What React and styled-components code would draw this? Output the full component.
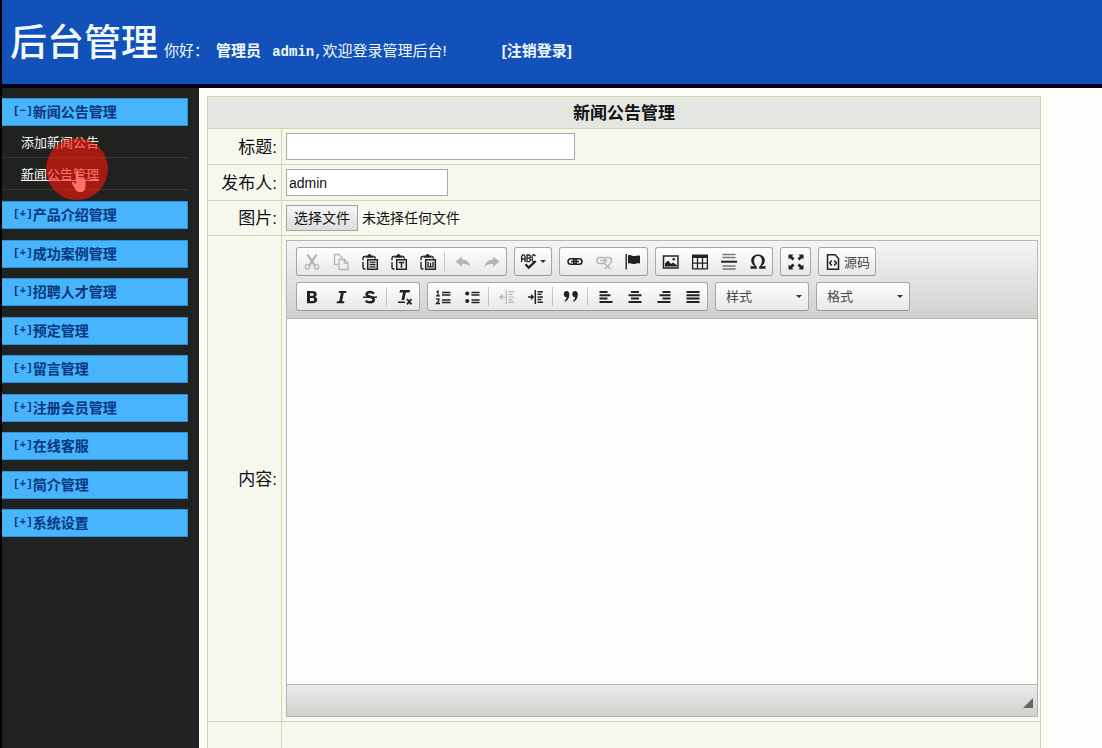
import React, { useState } from 'react';
import styled, { createGlobalStyle, css } from 'styled-components';

const menuGroups = [
  { name: '新闻公告管理', open: true, children: ['添加新闻公告', '新闻公告管理'] },
  { name: '产品介绍管理' },
  { name: '成功案例管理' },
  { name: '招聘人才管理' },
  { name: '预定管理' },
  { name: '留言管理' },
  { name: '注册会员管理' },
  { name: '在线客服' },
  { name: '简介管理' },
  { name: '系统设置' },
];

const clipboard = (
  <>
    <path d="M4.5 3.5H3.8C2.6 3.5 2 4.1 2 5.200v2M2 9v5.500c0 1.100.6 1.500 1.500 1.500h1" fill="none" stroke="currentColor" strokeWidth="1.400" />
    <path d="M4.500 2.500h2.500C7 1.500 7.700 1 8.500 1s1.500.5 1.500 1.500h2.500v2.200h-8z" />
    <path d="M12.500 3.500c1.200 0 1.800.6 1.800 1.700v.6" fill="none" stroke="currentColor" strokeWidth="1.300" />
    <path d="M6.700 6.700h9.600v9.600H6.700z" fill="none" stroke="currentColor" strokeWidth="1.500" />
  </>
);

const icons = {
  cut: (
    <>
      <path d="M4.500 1.500l7 10.500M13.500 1.500l-7 10.500" fill="none" stroke="currentColor" strokeWidth="2.300" />
      <circle cx="4.500" cy="13.800" r="2.200" fill="none" stroke="currentColor" strokeWidth="1.400" />
      <circle cx="13.500" cy="13.800" r="2.200" fill="none" stroke="currentColor" strokeWidth="1.400" />
    </>
  ),
  copy: (
    <g fill="none" stroke="currentColor" strokeWidth="1.300">
      <path d="M6 11.500H2.500v-10h4.500l3 3V6" />
      <path d="M7 6.500h5.500l3.500 3.500v6.500H7z" />
      <path d="M12.300 6.700v3.500h3.500" />
    </g>
  ),
  paste: (
    <>
      {clipboard}
      <path d="M8.500 9.200h6M8.500 11.500h6M8.500 13.800h6" stroke="currentColor" strokeWidth="1.300" />
    </>
  ),
  pasteText: (
    <>
      {clipboard}
      <path d="M8.700 9.500h5.600M11.500 9.500v5.200" stroke="currentColor" strokeWidth="1.500" />
    </>
  ),
  pasteWord: (
    <>
      {clipboard}
      <path d="M9 8.800v5h5v-5M11.500 9.500v4" fill="none" stroke="currentColor" strokeWidth="1.300" />
    </>
  ),
  undo: <path d="M1.500 8.500L8 3.500v3c4.500.2 7.500 2.500 8.500 7.500-2-2.500-4.500-3.200-8.500-3v3z" />,
  redo: <path d="M16.500 8.500L10 3.500v3c-4.500.2-7.500 2.500-8.500 7.500 2-2.500 4.500-3.200 8.500-3v3z" />,
  spell: (
    <>
      <path
        d="M1.600 9V3.500l1.200-1.700h1.100l1.200 1.700V9M1.600 6h3.500M7 8.600V2h2.300l1 1v1.200l-1 1H7h2.300l1 1v1.400l-1 1zM15.500 3.200L14.500 2h-1.300l-1 1v4.600l1 1h1.300"
        fill="none"
        stroke="currentColor"
        strokeWidth="1.300"
      />
      <path d="M5.500 11.200l3.200 3.500 7-6.700" fill="none" stroke="currentColor" strokeWidth="2.300" />
    </>
  ),
  link: (
    <g fill="none" stroke="currentColor" strokeWidth="1.500">
      <rect x="2" y="5.700" width="8.500" height="5.600" rx="2.800" />
      <rect x="7.500" y="5.700" width="8.500" height="5.600" rx="2.800" />
      <path d="M5 8.500h8" />
    </g>
  ),
  unlink: (
    <g fill="none" stroke="currentColor" strokeWidth="1.500">
      <rect x="1.800" y="4.500" width="8.500" height="6" rx="3" />
      <path d="M10 4.500h3.500c2 0 3 1.500 3 3S15.500 10 14.500 10M5.500 7.500h7" />
      <path d="M9.500 10.500l6 5.500M15.500 10.500l-6 5.500" />
    </g>
  ),
  flag: (
    <>
      <path d="M2.200 1v15.500" stroke="currentColor" strokeWidth="1.400" />
      <path d="M4 2.200c2.500-1 4 .9 6.500.8 2 0 3.500-.8 5.500-.3v7.800c-2-.5-3.500.5-5.500.5C8 11 6.500 9.500 4 10.500z" />
    </>
  ),
  image: (
    <>
      <rect x="1.500" y="3" width="14.500" height="12" fill="none" stroke="currentColor" strokeWidth="1.500" />
      <circle cx="11.800" cy="6.300" r="1.300" />
      <path d="M3 13.500v-3l3-3 3 3.500 2-1.500 3.800 2.500v1.500z" />
    </>
  ),
  table: (
    <>
      <path d="M1 1.500h16v3.500H1z" />
      <path d="M1.600 2v13.900h14.800V2M1.500 10.200h15M6.500 4v12M11.500 4v12" fill="none" stroke="currentColor" strokeWidth="1.300" />
    </>
  ),
  rule: (
    <>
      <path d="M2.500 1.500h13M2.500 4.500h13M2.500 13h13M2.500 16h13" stroke="currentColor" strokeOpacity=".6" strokeWidth="1.500" />
      <path d="M1 8.700h16" stroke="currentColor" strokeWidth="2" />
    </>
  ),
  omega: (
    <path
      d="M2 13.200h3.700C3.500 11.800 2.200 9.900 2.200 7.500 2.200 4 5 1.500 9 1.500s6.800 2.500 6.800 6c0 2.400-1.300 4.300-3.500 5.700H16l.5-1.200v3.800h-6.300v-2.100c1.700-1.500 2.700-3.500 2.700-5.900C12.900 5 11.500 3 9 3S5.100 5 5.100 7.800c0 2.400 1 4.400 2.700 5.900v2.100H1.500V12z"
    />
  ),
  expand: (
    <path d="M1.500 1.500h5L5 3l2.500 2.500-2 2L3 5 1.500 6.500zM16.500 1.500v5L15 5l-2.500 2.500-2-2L13 3l-1.500-1.500zM1.500 16.500v-5L3 13l2.500-2.500 2 2L5 15l1.500 1.500zM16.500 16.500h-5L13 15l-2.500-2.500 2-2L15 13l1.500-1.500z" />
  ),
  source: (
    <g fill="none" stroke="currentColor" strokeWidth="1.500">
      <path d="M3.500 1.800h7.500l3.500 3.700v10.700h-11z" />
      <path d="M7.700 7.500L5.700 10l2 2.500M10.300 7.500l2 2.500-2 2.500" />
    </g>
  ),
  bold: <path fillRule="evenodd" d="M4 3h5.500c2.800 0 4.200 1.200 4.200 3.200 0 1.300-.7 2.200-1.900 2.600 1.500.4 2.400 1.400 2.400 2.900 0 2.200-1.600 3.500-4.500 3.500H4zM7 5.300v2.500h2c1.200 0 1.700-.4 1.700-1.300 0-.8-.5-1.200-1.700-1.200zM7 10v3h2.300c1.200 0 1.800-.5 1.800-1.500S10.500 10 9.300 10z" />,
  italic: <path d="M7 3h7.500l-.4 1.900h-2.300l-1.700 8.400h2.300L12 15.200H4.500l.4-1.900h2.300l1.700-8.400H6.600z" />,
  strike: (
    <>
      <path d="M13 5.400C11.800 4.500 10.500 4 9 4 7 4 5.600 4.900 5.600 6.300c0 3.200 7.200 1.800 7.200 5.200 0 1.700-1.500 2.800-3.800 2.800-1.600 0-3.200-.5-4.300-1.500" fill="none" stroke="currentColor" strokeWidth="2.500" />
      <path d="M2 9.200h14" stroke="currentColor" strokeWidth="1.500" />
    </>
  ),
  removeFormat: (
    <>
      <path d="M4 2h10l-.5 2.500h-3.700L8.300 12H5.500L7 4.500H3.500zM2 13.500h7V15H2z" />
      <path d="M11 11l4.500 5.300M15.500 11L11 16.300" stroke="currentColor" strokeWidth="1.800" />
    </>
  ),
  numbered: (
    <>
      <path d="M8 4.500h8.500M8 7h8.500M8 12h8.500M8 14.500h8.500" stroke="currentColor" strokeWidth="1.400" />
      <path d="M2.500 4.200L4 3v4.800M2 7.800h4M2.200 11h2.600v2L2.500 15.500H6" fill="none" stroke="currentColor" strokeWidth="1.300" />
    </>
  ),
  bulleted: (
    <>
      <circle cx="4.200" cy="5.500" r="2" />
      <circle cx="4.200" cy="13" r="2" />
      <path d="M8.500 4.500h8M8.500 7h8M8.500 12h8M8.500 14.500h8" stroke="currentColor" strokeWidth="1.400" />
    </>
  ),
  outdent: (
    <>
      <path d="M8.300 2v14M10.500 3.700h5.500M10.500 6.300h4M10.500 9h5.500M10.500 11.600h4M10.500 14.200h5.500M3 9h4" stroke="currentColor" strokeWidth="1.200" />
      <path d="M1 9l3.500-3v6z" />
    </>
  ),
  indent: (
    <>
      <path d="M8.300 2v14M10.500 3.700h5.500M10.500 6.300h4M10.500 9h5.500M10.500 11.600h4M10.500 14.200h5.500M1 9h4" stroke="currentColor" strokeWidth="1.500" />
      <path d="M7.300 9L4 6v6z" />
    </>
  ),
  quote: <path d="M1.800 6.500a2.800 2.800 0 1 1 5.500-.2c.2 3.200-1.300 6.200-4.300 7.500l-.5-1c1.300-.9 2-2.100 2.100-3.600-1.600 0-2.800-1.200-2.800-2.700zM10.300 6.500a2.800 2.800 0 1 1 5.500-.2c.2 3.200-1.300 6.200-4.300 7.500l-.5-1c1.300-.9 2-2.100 2.100-3.600-1.600 0-2.800-1.200-2.800-2.700z" />,
  left: <path d="M2.500 3h8v2h-8zM2.500 6.300h11v2h-11zM2.500 9.600h8v2h-8zM2.500 12.900h13v2h-13z" />,
  center: <path d="M5 3h8v2H5zM2.500 6.300h13v2h-13zM5 9.600h8v2H5zM2.500 12.900h13v2h-13z" />,
  right: <path d="M7.500 3h8v2h-8zM4.500 6.300h11v2h-11zM7.500 9.600h8v2h-8zM2.500 12.900h13v2h-13z" />,
  justify: <path d="M2.500 3h13v2h-13zM2.500 6.300h13v2h-13zM2.500 9.600h13v2h-13zM2.500 12.900h13v2h-13z" />,
};

// '|' is a separator, a leading '-' marks a disabled button
const toolbarTop = [
  ['-cut', '-copy', 'paste', 'pasteText', 'pasteWord', '|', '-undo', '-redo'],
  ['spell'],
  ['link', '-unlink', 'flag'],
  ['image', 'table', 'rule', 'omega'],
  ['expand'],
  ['source'],
];

const toolbarBottom = [
  ['bold', 'italic', 'strike', '|', 'removeFormat'],
  ['numbered', 'bulleted', '|', '-outdent', 'indent', '|', 'quote', '|', 'left', 'center', 'right', 'justify'],
];

const ToolIcon = ({ name }) => (
  <svg width="18" height="18" viewBox="0 0 18 18" fill="currentColor" aria-hidden="true">
    {icons[name]}
  </svg>
);

const ToolGroup = ({ items }) => (
  <Group>
    {items.map((item, index) => {
      if (item === '|') return <Separator key={index} />;
      const disabled = item.startsWith('-');
      const name = item.replace('-', '');
      return (
        <ToolButton
          key={index}
          type="button"
          aria-label={name === 'source' ? undefined : name}
          disabled={disabled}
          $wide={name === 'spell' || name === 'source'}
        >
          <ToolIcon name={name} />
          {name === 'spell' && <Caret />}
          {name === 'source' && <span>源码</span>}
        </ToolButton>
      );
    })}
  </Group>
);

const ToolSelect = ({ label }) => (
  <SelectBox>
    <select aria-label={label}>
      <option>{label}</option>
    </select>
    <Caret />
  </SelectBox>
);

const App = () => {
  const [title, setTitle] = useState('');
  const [author, setAuthor] = useState('admin');
  const [content, setContent] = useState('');
  const [fileName, setFileName] = useState('');

  return (
    <Page>
      <GlobalStyle />
      <Header>
        <Brand>后台管理</Brand>
        <Welcome>
          <span>你好：</span>
          <UserName>
            管理员 <code>admin</code>
          </UserName>
          <code>,</code>
          <span>欢迎登录管理后台!</span>
        </Welcome>
        <Logout href="#logout">[注销登录]</Logout>
      </Header>

      <Body>
        <Sidebar>
          {menuGroups.map((group) => (
            <MenuGroup key={group.name}>
              <MenuButton type="button" aria-expanded={!!group.open}>
                <code>{group.open ? '[−]' : '[+]'}</code>
                {group.name}
              </MenuButton>
              {group.children?.map((child, index) => (
                <SubItem key={child}>
                  <SubLink href="#news" $active={index === 1}>
                    {child}
                  </SubLink>
                  {index === 1 && (
                    <Pointer>
                      <svg width="18" height="24" viewBox="0 0 18 24" aria-hidden="true">
                        <path
                          d="M5 2c0-1.300 2.400-1.300 2.400 0v6.500c.3-1.200 2.200-1 2.400.2.500-1 2.200-.7 2.400.5.600-.8 2.300-.4 2.300 1V16c0 3.500-1.500 6-4.500 6H8.500c-2 0-3.200-1-4-2.500L1 13.500c-.5-1.400 1-2.200 2-1.200L5 14.500z"
                          fill="#fff"
                        />
                      </svg>
                    </Pointer>
                  )}
                </SubItem>
              ))}
            </MenuGroup>
          ))}
        </Sidebar>

        <Main>
          <FormTable>
            <thead>
              <tr>
                <TitleCell colSpan={2}>新闻公告管理</TitleCell>
              </tr>
            </thead>
            <tbody>
              <tr>
                <LabelCell>
                  <label htmlFor="title">标题:</label>
                </LabelCell>
                <FieldCell>
                  <TextInput id="title" $long value={title} onChange={(e) => setTitle(e.target.value)} />
                </FieldCell>
              </tr>
              <tr>
                <LabelCell>
                  <label htmlFor="author">发布人:</label>
                </LabelCell>
                <FieldCell>
                  <TextInput id="author" value={author} onChange={(e) => setAuthor(e.target.value)} />
                </FieldCell>
              </tr>
              <tr>
                <LabelCell>
                  <label htmlFor="picture">图片:</label>
                </LabelCell>
                <FieldCell>
                  <FilePicker>
                    <input
                      id="picture"
                      type="file"
                      onChange={(e) => setFileName(e.target.files[0]?.name || '')}
                    />
                    <FileButton>选择文件</FileButton>
                    <span>{fileName || '未选择任何文件'}</span>
                  </FilePicker>
                </FieldCell>
              </tr>
              <tr>
                <LabelCell>
                  <label htmlFor="content">内容:</label>
                </LabelCell>
                <FieldCell>
                  <Editor>
                    <Toolbar>
                      <ToolRow>
                        {toolbarTop.map((items, index) => (
                          <ToolGroup key={index} items={items} />
                        ))}
                      </ToolRow>
                      <ToolRow>
                        {toolbarBottom.map((items, index) => (
                          <ToolGroup key={index} items={items} />
                        ))}
                        <ToolSelect label="样式" />
                        <ToolSelect label="格式" />
                      </ToolRow>
                    </Toolbar>
                    <ContentArea id="content" value={content} onChange={(e) => setContent(e.target.value)} />
                    <StatusBar>
                      <Resizer />
                    </StatusBar>
                  </Editor>
                </FieldCell>
              </tr>
              <SpacerRow>
                <LabelCell />
                <FieldCell />
              </SpacerRow>
            </tbody>
          </FormTable>
        </Main>
      </Body>
    </Page>
  );
};

// Styled Components
const GlobalStyle = createGlobalStyle`
  * {
    box-sizing: border-box;
  }

  body {
    margin: 0;
    font-family: 'Liberation Sans', 'Noto Sans CJK SC', sans-serif;
    color: #111;
  }

  button, input, select, textarea {
    font-family: inherit;
    margin: 0;
  }
`;

const Page = styled.div`
  display: flex;
  flex-direction: column;
  height: 100vh;
  overflow: hidden;
  border-left: 2px solid #000;
  background: #fdfefc;
`;

const Header = styled.header`
  display: flex;
  align-items: baseline;
  flex-shrink: 0;
  height: 88px;
  padding: 16px 8px 0;
  border-bottom: 4px solid #00001a;
  background: #1251b9;
  color: #f2faff;
  white-space: nowrap;
`;

const Brand = styled.h1`
  margin: 0;
  font-size: 37px;
  font-weight: 500;
  line-height: 56px;
`;

const Welcome = styled.p`
  display: flex;
  align-items: baseline;
  margin: 0 0 0 6px;
  font-size: 15px;

  code {
    font-family: 'Liberation Mono', monospace;
    font-size: 14px;
  }
`;

const UserName = styled.strong`
  margin-left: 7px;

  code {
    margin-left: 7px;
  }
`;

const Logout = styled.a`
  margin-left: 55px;
  color: inherit;
  font-size: 15px;
  font-weight: bold;
  text-decoration: none;
`;

const Body = styled.div`
  display: flex;
  flex: 1;
  min-height: 0;
`;

const Sidebar = styled.nav`
  flex-shrink: 0;
  width: 197px;
  padding: 10px 11px 0 0;
  background: #20221f;
`;

const MenuGroup = styled.div`
  margin-bottom: 11px;

  &:nth-child(odd) {
    margin-bottom: 10px;
  }

  &:first-child {
    margin-bottom: 11px;
  }
`;

const MenuButton = styled.button`
  display: flex;
  align-items: center;
  width: 100%;
  height: 28px;
  padding: 0 11px 2px;
  border: 1px solid #2f8fdc;
  border-left: none;
  background: #48b4fc;
  color: #07357e;
  font-size: 14px;
  font-weight: bold;
  cursor: pointer;

  code {
    font-family: 'Liberation Mono', monospace;
    font-size: 11px;
  }
`;

const SubItem = styled.div`
  position: relative;
  height: 32px;
  padding-left: 19px;
  border-bottom: 1px solid #363836;
  line-height: 31px;
`;

const SubLink = styled.a`
  color: #f4f4f4;
  font-size: 13px;
  text-decoration: ${({ $active }) => ($active ? 'underline' : 'none')};
`;

const Pointer = styled.span`
  position: absolute;
  top: -20px;
  left: 44px;
  width: 62px;
  height: 62px;
  border-radius: 50%;
  pointer-events: none;

  svg {
    position: absolute;
    top: 32px;
    left: 25px;
  }

  &::after {
    position: absolute;
    inset: 0;
    content: '';
    border-radius: 50%;
    background: rgba(252, 24, 8, 0.6);
  }
`;

const Main = styled.main`
  flex: 1;
  min-width: 0;
  padding: 8px 61px 0 8px;
`;

const FormTable = styled.table`
  width: 100%;
  border-collapse: collapse;
  font-size: 17px;
`;

const cell = css`
  border: 1px solid #d3d6ae;
  background: #f7f8ed;
`;

const TitleCell = styled.th`
  ${cell}
  height: 32px;
  padding: 2px 0 0;
  background: #e4e6e2;
  line-height: 24px;
`;

const LabelCell = styled.td`
  ${cell}
  width: 74px;
  padding: 2px 4px 0;
  line-height: 24px;
  text-align: right;
`;

const FieldCell = styled.td`
  ${cell}
  padding: 4px 2px 4px 4px;
`;

const SpacerRow = styled.tr`
  height: 36px;
`;

const TextInput = styled.input`
  display: block;
  width: ${({ $long }) => ($long ? '289px' : '162px')};
  height: 27px;
  padding: 0 2px;
  border: 1px solid #a9a9a9;
  background: #fff;
  color: #111;
  font-size: 14px;
`;

const FilePicker = styled.div`
  position: relative;
  display: flex;
  align-items: baseline;
  gap: 4px;
  width: max-content;
  font-size: 14px;
  line-height: 24px;

  input {
    position: absolute;
    inset: 0;
    width: 100%;
    opacity: 0;
  }
`;

const FileButton = styled.span`
  padding: 0 7px;
  border: 1px solid #a3a3a3;
  background: linear-gradient(#f6f6f6, #dcdcdc);
`;

const Editor = styled.div`
  border: 1px solid #b4b6b4;
`;

const Toolbar = styled.div`
  display: flex;
  flex-direction: column;
  gap: 6px;
  padding: 6px 9px 7px;
  border-bottom: 1px solid #b4b6b4;
  background: linear-gradient(#f5f5f5, #cfd1cf);
`;

const ToolRow = styled.div`
  display: flex;
  gap: 7px;
`;

const frame = css`
  display: flex;
  height: 29px;
  border: 1px solid #a6a8a6;
  border-bottom-color: #979997;
  border-radius: 3px;
  background: linear-gradient(#fff, #e6e8e6);
`;

const Group = styled.div`
  ${frame}
  align-items: center;
`;

const ToolButton = styled.button`
  display: flex;
  align-items: center;
  justify-content: center;
  gap: ${({ $wide }) => ($wide ? '2px' : '0')};
  min-width: 29px;
  height: 27px;
  padding: ${({ $wide }) => ($wide ? '0 5px' : '0')};
  border: none;
  background: none;
  color: #222;
  font-size: 13px;
  cursor: pointer;

  &:disabled {
    color: #b4b6b4;
    cursor: default;
  }

  span {
    color: #474747;
  }
`;

const Separator = styled.span`
  width: 1px;
  height: 19px;
  margin: 0 3px 0 2px;
  background: #c4c6c4;
`;

const Caret = styled.i`
  border: 3px solid transparent;
  border-top-color: #333;
  border-bottom: none;
`;

const SelectBox = styled.div`
  ${frame}
  align-items: center;
  width: 94px;
  padding-right: 6px;

  select {
    flex: 1;
    height: 27px;
    padding: 0 0 0 10px;
    border: none;
    background: none;
    color: #474747;
    font-size: 13px;
    appearance: none;
  }
`;

const ContentArea = styled.textarea`
  display: block;
  width: 100%;
  height: 365px;
  padding: 8px;
  border: none;
  background: #fdfefc;
  resize: none;
`;

const StatusBar = styled.div`
  display: flex;
  align-items: flex-end;
  justify-content: flex-end;
  height: 32px;
  padding: 0 4px 8px;
  border-top: 1px solid #b4b6b4;
  background: linear-gradient(#ebebeb, #cfd1cf);
`;

const Resizer = styled.span`
  width: 0;
  height: 0;
  border: 5px solid transparent;
  border-right-color: #666;
  border-bottom-color: #666;
`;

export default App;
